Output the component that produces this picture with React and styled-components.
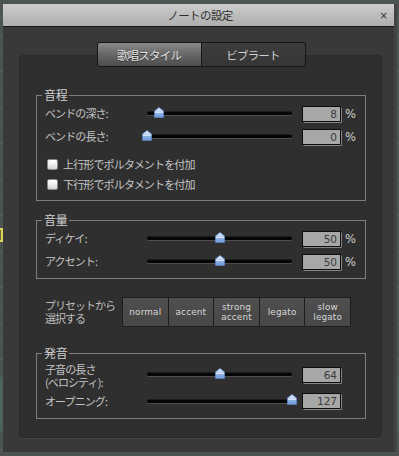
import React from 'react';
import styled, { createGlobalStyle } from 'styled-components';

const Global = createGlobalStyle`
  html, body { margin: 0; padding: 0; background: #4b5351; }
  body { font-family: "Noto Sans CJK JP", "Noto Sans", sans-serif; }
  * { box-sizing: border-box; }
`;

const Desktop = styled.div`
  position: relative;
  width: 399px;
  height: 456px;
  padding: 4px 2px 0 3px;
  overflow: hidden;
  background:
    linear-gradient(to bottom, transparent 0, transparent 378px, #4b655d 378px, #4b655d 430px, transparent 430px),
    repeating-linear-gradient(to bottom, #4c5452 0, #4c5452 17px, #56605d 17px, #56605d 18px),
    #4c5452;
`;

const Marker = styled.div`
  position: absolute;
  left: -3px;
  top: 228px;
  width: 6px;
  height: 14px;
  border: 2px solid #d9d75a;
  background: #6b6b3a;
`;

const Window = styled.div`
  position: relative;
  width: 394px;
  height: 448px;
  display: flex;
  flex-direction: column;
  background: #393939;
  border-right: 3px solid #444;
`;

const TitleBar = styled.div`
  height: 23px;
  display: grid;
  grid-template-columns: 1fr auto 1fr;
  align-items: center;
  background: linear-gradient(to bottom, #cdcdcd 0%, #bdbdbd 50%, #aeaeae 100%);
  border-bottom: 1px solid #1c1c1c;
`;

const Title = styled.div`
  grid-column: 2;
  font-size: 11.5px;
  letter-spacing: -0.6px;
  color: #2e2e2e;
  line-height: 14px;
  padding-left: 3px;
`;

const Close = styled.div`
  grid-column: 3;
  justify-self: end;
  margin-right: 6px;
  font-family: "DejaVu Sans", sans-serif;
  font-size: 10px;
  color: #333;
`;

const Body = styled.div`
  flex: 1;
  padding: 28px 12px 14px 16px;
  display: flex;
  flex-direction: column;
`;

const Panel = styled.div`
  flex: 1;
  display: flex;
  flex-direction: column;
  padding: 0 16px 19px 17px;
  background: #2f2f2f;
  border-radius: 5px;
  box-shadow: inset 0 0 0 1px #2a2a2a, 0 1px 0 #424242;
`;

const Tabs = styled.div`
  align-self: center;
  margin-top: -13px;
  display: flex;
  height: 25px;
  border: 1px solid #161616;
  border-radius: 3px;
  overflow: hidden;
  background: #161616;
  gap: 1px;
`;

const Tab = styled.div`
  width: 103px;
  display: flex;
  align-items: center;
  justify-content: center;
  font-size: 11.5px;
  letter-spacing: -0.8px;
  color: ${p => (p.$active ? '#e6e6e6' : '#cfcfcf')};
  background: ${p =>
    p.$active
      ? 'linear-gradient(to bottom, #8a8a8a 0%, #6a6a6a 45%, #4d4d4d 100%)'
      : 'linear-gradient(to bottom, #3d3d3d 0%, #363636 100%)'};
  text-shadow: ${p => (p.$active ? '0 1px 0 #2a2a2a' : 'none')};
`;

const Group = styled.fieldset`
  margin: ${p => p.$mt}px 0 0 0;
  padding: 0 8px ${p => p.$pb || 5}px 8px;
  border: 1px solid #7d7d7d;
  min-width: 0;
`;

const Legend = styled.legend`
  margin-left: -3px;
  padding: 0 2px;
  font-size: 12px;
  line-height: 14px;
  height: 14px;
  color: #d0d0d0;
  letter-spacing: -0.3px;
`;

const Row = styled.div`
  height: ${p => p.$h || 23}px;
  display: flex;
  align-items: center;
`;

const Label = styled.div`
  width: 97px;
  flex: none;
  font-size: 11px;
  line-height: 13px;
  letter-spacing: -0.9px;
  color: #c3c3c3;
  white-space: nowrap;
  margin-top: ${p => p.$mt || 0}px;
`;

const LabelLine = styled.div`
  height: ${p => p.$h}px;
  line-height: ${p => p.$h}px;
`;

const SliderBox = styled.div`
  position: relative;
  width: 155px;
  height: 100%;
  flex: none;
  display: flex;
  align-items: center;
  padding: 0 5px;
`;

const Track = styled.div`
  flex: 1;
  height: 3px;
  border-radius: 2px;
  background: #050505;
  box-shadow: 0 1px 0 #4e4e4e, 0 -1px 0 #1e1e1e;
`;

const ThumbWrap = styled.div`
  position: absolute;
  top: calc(50% - 7px);
  width: 10px;
  height: 11px;
  display: flex;
`;

const ValueBox = styled.div`
  width: 39px;
  height: 16px;
  flex: none;
  margin-left: 5px;
  border: 1px solid #0d0d0d;
  background: #a7a7a7;
  color: #3c3c3c;
  font-family: "DejaVu Sans", sans-serif;
  font-size: 10.5px;
  line-height: 14px;
  text-align: right;
  padding-right: 3px;
  box-shadow: 1px 1px 0 -0.5px #dcdcdc;
`;

const Unit = styled.div`
  margin-left: 4px;
  font-family: "DejaVu Sans", sans-serif;
  font-size: 11.5px;
  color: #cfcfcf;
`;

const CheckRow = styled.label`
  height: 20px;
  display: flex;
  align-items: center;
  gap: 5px;
  padding-left: 2px;
  font-size: 11px;
  letter-spacing: -0.85px;
  color: #c6c6c6;
`;

const CheckBox = styled.span`
  width: 11px;
  height: 11px;
  border-radius: 2px;
  background: linear-gradient(to bottom, #ffffff 0%, #ececec 55%, #d2d2d2 100%);
  border: 1px solid #8a8a8a;
`;

const Spacer = styled.div`
  height: ${p => p.$h}px;
`;

const PresetRow = styled.div`
  margin-top: 18px;
  height: 30px;
  display: flex;
  align-items: center;
  padding-left: 9px;
`;

const PresetLabel = styled.div`
  width: 77px;
  font-size: 11px;
  letter-spacing: -1px;
  color: #bdbdbd;
`;

const ButtonGroup = styled.div`
  width: 229px;
  height: 30px;
  display: flex;
  gap: 1px;
  border: 1px solid #1d1d1d;
  background: #1d1d1d;
`;

const PresetButton = styled.div`
  flex: 1;
  display: flex;
  align-items: center;
  justify-content: center;
  text-align: center;
  background: linear-gradient(to bottom, #4f4f4f 0%, #474747 100%);
  color: #d8d8d8;
  font-family: "DejaVu Sans", sans-serif;
  font-size: 8.8px;
  line-height: 10.5px;
  letter-spacing: 0.2px;
  white-space: pre-line;
`;

const Thumb = ({ ratio }) => (
  <ThumbWrap style={{ left: `${ratio * 145}px` }}>
    <svg width="10" height="11" viewBox="0 0 10 11">
      <defs>
        <linearGradient id="tg" x1="0" y1="0" x2="0" y2="1">
          <stop offset="0" stopColor="#e4edfb" />
          <stop offset="0.45" stopColor="#b9d0f2" />
          <stop offset="0.52" stopColor="#dfe9fa" />
          <stop offset="0.6" stopColor="#88aee4" />
          <stop offset="1" stopColor="#6c98d8" />
        </linearGradient>
      </defs>
      <path
        d="M5 0.4 L9.6 4 L9.6 10 Q9.6 10.6 9 10.6 L1 10.6 Q0.4 10.6 0.4 10 L0.4 4 Z"
        fill="url(#tg)"
        stroke="#5d86c4"
        strokeWidth="0.8"
      />
    </svg>
  </ThumbWrap>
);

const SliderRow = ({ label, value, max, unit, h, labelMt }) => (
  <Row $h={h}>
    <Label $mt={labelMt}>{label}</Label>
    <SliderBox>
      <Track />
      <Thumb ratio={value / max} />
    </SliderBox>
    <ValueBox>{value}</ValueBox>
    {unit && <Unit>%</Unit>}
  </Row>
);

const presets = ['normal', 'accent', 'strong\naccent', 'legato', 'slow\nlegato'];

export default function App() {
  return (
    <>
      <Global />
      <Desktop>
        <Marker />
        <Window>
          <TitleBar>
            <Title>ノートの設定</Title>
            <Close>×</Close>
          </TitleBar>
          <Body>
            <Panel>
              <Tabs>
                <Tab $active>歌唱スタイル</Tab>
                <Tab>ビブラート</Tab>
              </Tabs>

              <Group $mt={21} $pb={6}>
                <Legend>音程</Legend>
                <SliderRow label="ベンドの深さ:" value={8} max={100} unit />
                <SliderRow label="ベンドの長さ:" value={0} max={100} unit />
                <Spacer $h={6} />
                <CheckRow>
                  <CheckBox />
                  上行形でポルタメントを付加
                </CheckRow>
                <CheckRow>
                  <CheckBox />
                  下行形でポルタメントを付加
                </CheckRow>
              </Group>

              <Group $mt={12} $pb={5}>
                <Legend>音量</Legend>
                <SliderRow label="ディケイ:" value={50} max={100} unit />
                <SliderRow label="アクセント:" value={50} max={100} unit />
              </Group>

              <PresetRow>
                <PresetLabel>
                  <LabelLine $h={13}>プリセットから</LabelLine>
                  <LabelLine $h={13}>選択する</LabelLine>
                </PresetLabel>
                <ButtonGroup>
                  {presets.map(p => (
                    <PresetButton key={p}>{p}</PresetButton>
                  ))}
                </ButtonGroup>
              </PresetRow>

              <Group $mt={19} $pb={5}>
                <Legend>発音</Legend>
                <SliderRow
                  label={
                    <>
                      <LabelLine $h={13}>子音の長さ</LabelLine>
                      <LabelLine $h={13}>(ベロシティ):</LabelLine>
                    </>
                  }
                  value={64}
                  max={127}
                  h={29}
                  labelMt={3}
                />
                <SliderRow label="オープニング:" value={127} max={127} h={24} />
              </Group>
            </Panel>
          </Body>
        </Window>
      </Desktop>
    </>
  );
}
